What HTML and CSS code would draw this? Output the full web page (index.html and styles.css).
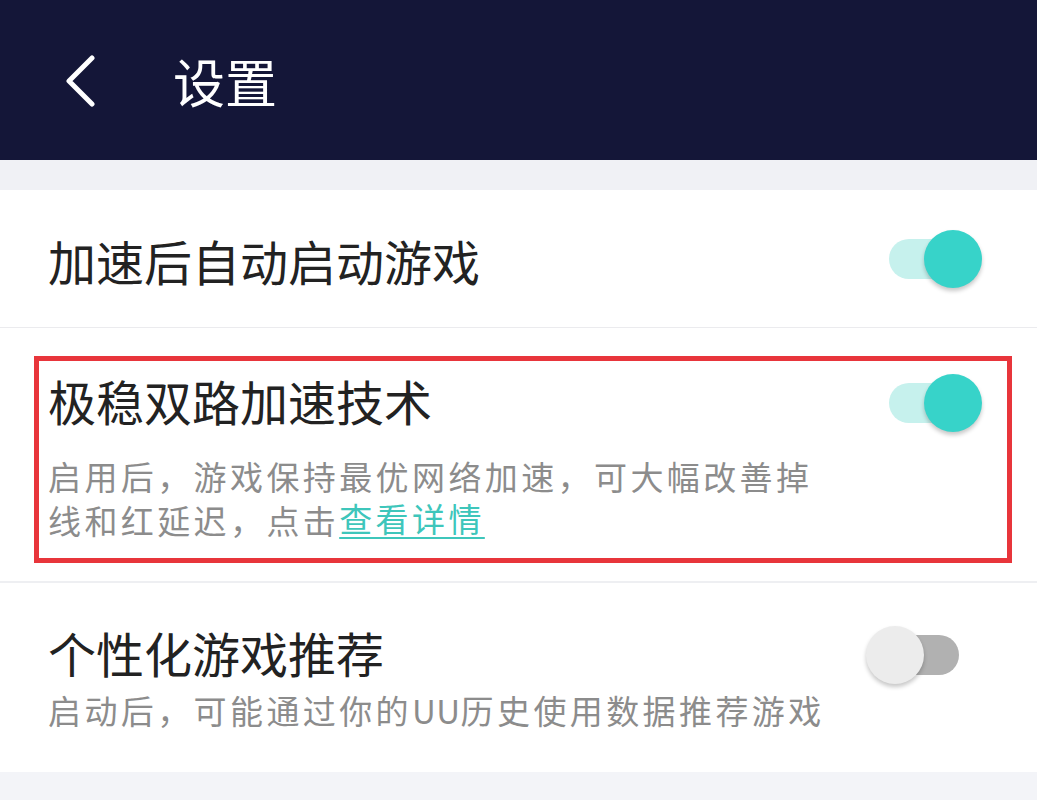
FILE: index.html
```html
<!DOCTYPE html>
<html lang="zh-CN">
<head>
<meta charset="utf-8">
<title>设置</title>
<link rel="stylesheet" href="styles.css">
</head>
<body>
<div class="page">
  <header class="topbar">
    <svg class="back" width="30" height="52" viewBox="0 0 30 52" aria-hidden="true">
      <polyline points="27,3 4,26 27,49" fill="none" stroke="#ffffff" stroke-width="5" stroke-linecap="round" stroke-linejoin="round"/>
    </svg>
    <h1 class="title">设置</h1>
  </header>
  <div class="gap"></div>

  <section class="row row-simple">
    <div class="text">
      <div class="label">加速后自动启动游戏</div>
    </div>
    <div class="toggle on"><span class="knob"></span></div>
  </section>

  <section class="row row-detail row-marked">
    <div class="text">
      <div class="label">极稳双路加速技术</div>
      <div class="desc">启用后，游戏保持最优网络加速，可大幅改善掉线和红延迟，点击<a class="link" href="#">查看详情</a></div>
    </div>
    <div class="toggle on"><span class="knob"></span></div>
    <div class="mark"></div>
  </section>

  <section class="row row-detail row-last">
    <div class="text">
      <div class="label">个性化游戏推荐</div>
      <div class="desc desc-short">启动后，可能通过你的<span class="latin">UU</span>历史使用数据推荐游戏</div>
    </div>
    <div class="toggle off"><span class="knob"></span></div>
  </section>

  <div class="bottom"></div>
</div>
</body>
</html>
```

FILE: styles.css
```css
html, body {
  margin: 0;
  padding: 0;
  background: #ffffff;
  overflow: hidden;
}

.page {
  width: 1037px;
  height: 800px;
  display: flex;
  flex-direction: column;
  font-family: "Noto Sans CJK SC", "Noto Sans", sans-serif;
}

.topbar {
  height: 160px;
  flex: none;
  background: #141638;
  display: flex;
  align-items: center;
  padding-left: 65px;
  box-sizing: border-box;
  gap: 78px;
}

.back {
  display: block;
  margin-top: 1px;
}

.title {
  margin: 0;
  color: #ffffff;
  font-size: 52px;
  font-weight: 400;
  line-height: 60px;
  margin-top: 2px;
}

.gap {
  height: 30px;
  flex: none;
  background: #f0f1f5;
}

.row {
  display: grid;
  grid-template-columns: 1fr auto;
  padding: 0 78px 0 48px;
  background: #ffffff;
  box-sizing: border-box;
  flex: none;
}

.row-simple {
  height: 138px;
  align-items: center;
  border-bottom: 1px solid #ebebee;
}

.row-detail {
  align-items: start;
}

.row-marked {
  position: relative;
  height: 253px;
  padding-top: 44px;
}

.row-last {
  height: 191px;
  padding-top: 41px;
  border-top: 2px solid #eeeff2;
}

.label {
  font-size: 48px;
  line-height: 56px;
  color: #222222;
  white-space: nowrap;
}

.row-simple .label {
  margin-top: 3px;
}

.desc {
  width: 790px;
  margin-top: 26px;
  font-size: 33px;
  letter-spacing: 3.4px;
  line-height: 44px;
  color: #8c8c8c;
}

.desc-short {
  margin-top: 8px;
  white-space: nowrap;
}

.latin {
  letter-spacing: 0.5px;
}

.link {
  display: inline-block;
  line-height: 40px;
  vertical-align: top;
  color: #3ec6bb;
  text-decoration: underline;
  text-decoration-thickness: 2px;
  text-underline-offset: 5px;
}

.toggle {
  position: relative;
  width: 70px;
  height: 40px;
  border-radius: 20px;
}

.row-detail .toggle {
  margin-top: 11px;
}

.toggle.on {
  background: #c6f1ed;
}

.toggle.off {
  background: #b1b1b1;
}

.knob {
  position: absolute;
  top: -9px;
  width: 58px;
  height: 58px;
  border-radius: 50%;
  box-shadow: 0 3px 4px rgba(0, 0, 0, 0.22);
}

.toggle.on .knob {
  left: 35px;
  background: #37d3c9;
}

.toggle.off .knob {
  left: -23px;
  background: #ececec;
}

.mark {
  position: absolute;
  left: 34px;
  top: 28px;
  width: 978px;
  height: 207px;
  box-sizing: border-box;
  border: 5px solid #e8353b;
  pointer-events: none;
}

.bottom {
  flex: 1;
  background: #f3f4f8;
}
```
